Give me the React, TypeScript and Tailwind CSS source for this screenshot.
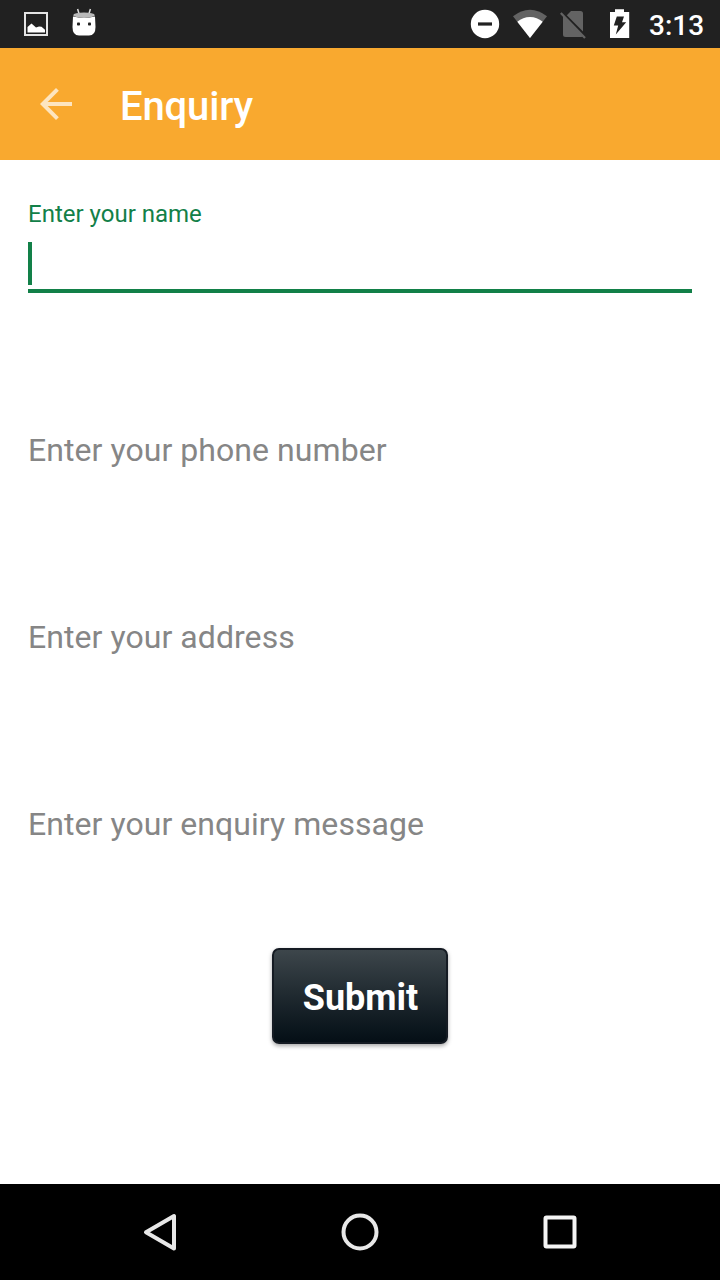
import React from "react";

function StatusBar() {
  return (
    <div className="flex h-12 shrink-0 items-start justify-between bg-[#212121] pl-6 pr-4">
      <div className="flex h-12 gap-6">
        <svg width="24" height="48" viewBox="0 0 24 48">
          <rect x="1" y="13" width="22" height="22" fill="none" stroke="#e4e4e4" strokeWidth="2" />
          <path d="M3.5 32.5V27l4-3.5 4.5 4 3-1 2.5.2 3.5 3v2.8z" fill="#fff" />
        </svg>
        <svg width="24" height="48" viewBox="0 0 24 48">
          <path d="M5.6 9l1.8 6M18.4 9l-1.8 6" stroke="#ddd" strokeWidth="1.5" />
          <path d="M1 16.5Q12 19 23 16.5L23.5 27Q23.5 35.5 17 35.5H7Q.5 35.5.5 27z" fill="#fff" />
          <ellipse cx="12" cy="15.2" rx="10.8" ry="2.7" fill="#b9b9b9" />
          <rect x="5" y="22.5" width="3" height="3" rx=".8" fill="#222" />
          <rect x="16" y="22.5" width="3" height="3" rx=".8" fill="#222" />
        </svg>
      </div>
      <div className="flex h-12">
        <svg width="180" height="48" viewBox="469 0 180 48">
          <circle cx="485" cy="24" r="14.2" fill="#fff" />
          <rect x="478" y="22.4" width="14" height="3.2" fill="#212121" />
          <path d="M513 16.3Q521 9.7 530 9.7T547 16.3L530 38z" fill="#636363" />
          <path d="M517.3 21.8Q523 17 530 17T542.7 21.8L530 38z" fill="#fff" />
          <path d="M571 11h9.5q2.5 0 2.5 2.5V31.5L566.8 15.3zM563 16L583 36.2l-1.500.8H565.500q-2.500 0-2.500-2.500z" fill="#636363" />
          <path d="M560.800 13L585 38" stroke="#636363" strokeWidth="2.200" />
          <path d="M610 12h5V9.300h9V12h5.200V38H610z" fill="#fff" />
          <path d="M616.800 16.500h7.200l-2 5.700h4.200L615.800 34.500l2.400-9h-4.400z" fill="#212121" />
        </svg>
        <span className="w-[55px] pt-[10px] text-[28px] font-medium leading-8 text-white">3:13</span>
      </div>
    </div>
  );
}

function Toolbar() {
  return (
    <header className="flex h-28 shrink-0 items-center bg-[#f9a92f] pl-10">
      <svg width="32" height="32" viewBox="4 4 16 16" fill="#fde5c0">
        <path d="M20 11H7.830l5.590-5.590L12 4l-8 8 8 8 1.410-1.410L7.830 13H20v-2z" />
      </svg>
      <h1 className="ml-12 pt-1.5 text-[40px] font-medium leading-[48px] tracking-[-0.15px] text-white">Enquiry</h1>
    </header>
  );
}

const fields = ["Enter your phone number", "Enter your address", "Enter your enquiry message"];

export default function App() {
  return (
    <div className="flex h-[1280px] w-[720px] flex-col overflow-hidden bg-white font-['Roboto',sans-serif]">
      <StatusBar />
      <Toolbar />
      <main className="flex flex-1 flex-col px-7 pt-10">
        <label className="text-[24px] leading-7 text-[#128048]">Enter your name</label>
        <div className="mt-3.5 h-[51px] border-b-4 border-[#128048]">
          <div className="h-[43px] w-1 bg-[#128048]" />
        </div>
        <div className="mt-[137px] flex flex-col gap-[147px] text-[32px] leading-10 tracking-[0.06px] text-[#868686]">
          {fields.map((field) => (
            <label key={field}>{field}</label>
          ))}
        </div>
        <button className="mt-[104px] h-24 w-44 self-center rounded-[7px] border-2 border-[#151b23] bg-linear-to-b from-[#3d464b] to-[#050f16] pl-px pt-1 text-[36px] font-bold leading-10 text-white shadow-[0_2px_4px_rgba(0,0,0,0.35)]">
          Submit
        </button>
      </main>
      <nav className="flex h-24 shrink-0 items-center justify-center gap-40 bg-black">
        <svg width="40" height="40" viewBox="0 0 40 40" fill="none" stroke="#e8e8e8" strokeWidth="4" strokeLinejoin="round">
          <path d="M6 20.300L34 4v32.600z" />
        </svg>
        <svg width="40" height="40" viewBox="0 0 40 40" fill="none" stroke="#e8e8e8" strokeWidth="4">
          <circle cx="20" cy="20" r="16.500" />
        </svg>
        <svg width="40" height="40" viewBox="0 0 40 40" fill="none" stroke="#f4f4f4" strokeWidth="4" strokeLinejoin="round">
          <rect x="5.500" y="5.500" width="29" height="29" rx="1" />
        </svg>
      </nav>
    </div>
  );
}
